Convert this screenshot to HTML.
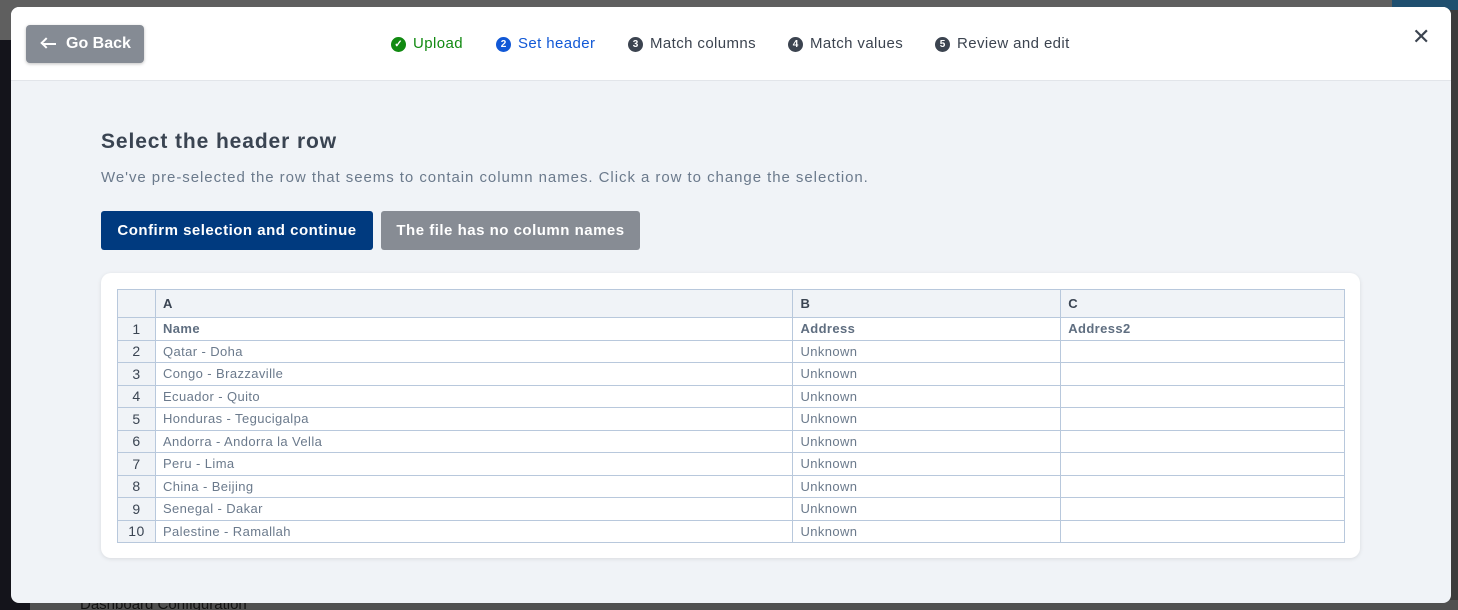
<!DOCTYPE html><html><head><style>
*{box-sizing:border-box;margin:0;padding:0}
body{width:1458px;height:610px;overflow:hidden;background:#14141b;font-family:"Liberation Sans",sans-serif;position:relative}
.top{position:absolute;left:0;top:0;width:1458px;height:40px;background:#5f5f5f}
.bot{position:absolute;left:30px;top:600px;width:1428px;height:10px;background:#505050;color:#111;font-size:15px;line-height:10px;padding-left:50px;overflow:hidden}
.rt{position:absolute;left:1440px;top:0;width:18px;height:610px;background:#3c3c3c}
.rt2{position:absolute;left:1392px;top:0;width:66px;height:10px;background:#1f4f6f}
.modal{position:absolute;left:11px;top:7px;width:1440px;height:596px;background:#f0f3f7;border-radius:8px;overflow:hidden}
.hdr{position:absolute;left:0;top:0;width:1440px;height:74px;background:#fff;border-bottom:1px solid #e2e5ea}
.back{position:absolute;left:15px;top:18px;width:118px;height:38px;background:#858b94;border-radius:4px;color:#fff;font-size:16px;font-weight:bold;line-height:38px;padding-left:40px;box-shadow:0 1px 3px rgba(0,0,0,.25)}
.back:before{content:"";position:absolute;left:16px;top:18px;width:14px;height:2px;background:#fff}
.back:after{content:"";position:absolute;left:16px;top:14px;width:6px;height:6px;border-left:2px solid #fff;border-bottom:2px solid #fff;transform:rotate(45deg)}
.step{position:absolute;top:28px;font-size:15px;color:#3c4450;line-height:18px;display:flex;align-items:center;letter-spacing:0.4px}
.step i{display:inline-block;width:15px;height:15px;border-radius:50%;background:#3c4450;color:#fff;font-size:10px;font-style:normal;font-weight:bold;text-align:center;line-height:15px;margin-right:7px;letter-spacing:0}
.x{position:absolute;left:1401px;top:17px;font-size:22px;color:#3c4450;font-weight:300}
h1{position:absolute;left:90px;top:123px;font-size:21px;color:#3a4452;font-weight:bold;letter-spacing:0.9px}
.sub{position:absolute;left:90px;top:162px;font-size:15px;color:#6b7a8c;letter-spacing:0.95px}
.b1{position:absolute;left:90px;top:204px;width:272px;height:39px;background:#003a7f;color:#fff;border-radius:3px;font-size:15px;font-weight:bold;text-align:center;line-height:40px;letter-spacing:0.5px}
.b2{position:absolute;left:370px;top:204px;width:259px;height:39px;background:#878c94;color:#fff;border-radius:3px;font-size:15px;font-weight:bold;text-align:center;line-height:40px;letter-spacing:0.5px}
.card{position:absolute;left:90px;top:266px;width:1259px;height:285px;background:#fff;border-radius:10px;box-shadow:0 1px 4px rgba(0,0,0,.1)}
table{position:absolute;left:16px;top:16px;border-collapse:collapse;width:1228px;font-size:13px;color:#6b7a8c;letter-spacing:0.4px}
td{border:1px solid #b8c8dc;height:22.5px;padding:0 7px;white-space:nowrap}
tr.h td{background:#f0f3f7;height:28px;font-weight:bold;color:#3a4452}
tr.n td{font-weight:bold;color:#5f6e80}
td.r{text-align:center;background:#f0f3f7;color:#3a4452!important;font-weight:normal!important;padding:0;font-size:14px}
</style></head><body>
<div class="top"></div><div class="rt"></div><div class="rt2"></div>
<div class="bot">Dashboard Configuration</div>
<div class="modal">
<div class="hdr">
<div class="back">Go Back</div>
<div class="step" style="left:380px;color:#118a11"><i style="background:#118a11">✓</i>Upload</div>
<div class="step" style="left:485px;color:#1158d6"><i style="background:#1158d6">2</i>Set header</div>
<div class="step" style="left:617px"><i>3</i>Match columns</div>
<div class="step" style="left:777px"><i>4</i>Match values</div>
<div class="step" style="left:924px"><i>5</i>Review and edit</div>
<div class="x">✕</div>
</div>
<h1>Select the header row</h1>
<div class="sub">We've pre-selected the row that seems to contain column names. Click a row to change the selection.</div>
<div class="b1">Confirm selection and continue</div>
<div class="b2">The file has no column names</div>
<div class="card"><table>
<colgroup><col style="width:38px"><col style="width:638px"><col style="width:268px"><col style="width:284px"></colgroup>
<tr class="h"><td class="r"></td><td>A</td><td>B</td><td>C</td></tr>
<tr class="n"><td class="r">1</td><td>Name</td><td>Address</td><td>Address2</td></tr>
<tr><td class="r">2</td><td>Qatar - Doha</td><td>Unknown</td><td></td></tr>
<tr><td class="r">3</td><td>Congo - Brazzaville</td><td>Unknown</td><td></td></tr>
<tr><td class="r">4</td><td>Ecuador - Quito</td><td>Unknown</td><td></td></tr>
<tr><td class="r">5</td><td>Honduras - Tegucigalpa</td><td>Unknown</td><td></td></tr>
<tr><td class="r">6</td><td>Andorra - Andorra la Vella</td><td>Unknown</td><td></td></tr>
<tr><td class="r">7</td><td>Peru - Lima</td><td>Unknown</td><td></td></tr>
<tr><td class="r">8</td><td>China - Beijing</td><td>Unknown</td><td></td></tr>
<tr><td class="r">9</td><td>Senegal - Dakar</td><td>Unknown</td><td></td></tr>
<tr><td class="r">10</td><td>Palestine - Ramallah</td><td>Unknown</td><td></td></tr>
</table></div>
</div>
</body></html>
